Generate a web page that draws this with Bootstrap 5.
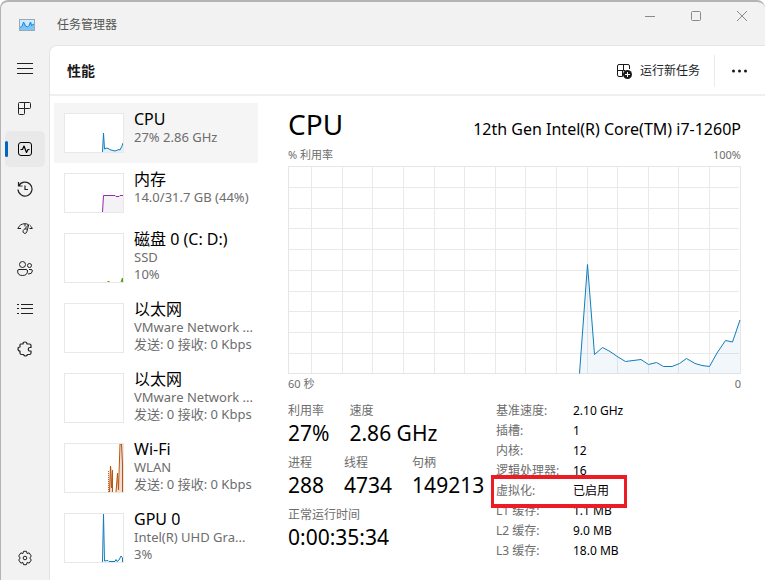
<!DOCTYPE html>
<html lang="zh-CN">
<head>
<meta charset="utf-8">
<meta name="viewport" content="width=device-width, initial-scale=1">
<title>任务管理器</title>
<link href="https://cdn.jsdelivr.net/npm/bootstrap@5.3.0/dist/css/bootstrap.min.css" rel="stylesheet">
<style>
  body { font-family: "Noto Sans", "Noto Sans CJK SC", sans-serif; font-size: 12px; line-height: 20px; color: #000; background: #fff; }
  svg { display: block; fill: none; }
  .tm-window { background: #f2f2f2; border: 1px solid #b4b4b4; border-width: 2px 0 0 1px; border-radius: 8px 8px 0 0; }
  .tm-title { height: 43px; padding-top: 2px; color: #555; }
  .tm-appicon { width: 48px; }
  .tm-window .btn { font-size: 12px; line-height: 20px; }
  .win-btn { width: 46px; height: 24px; color: #8a8a8a; }
  .tm-rail { width: 48px; padding-top: 6px; }
  .rail-btn { width: 40px; height: 36px; margin-bottom: 4px; color: #222; border-radius: 5px; position: relative; }
  .rail-btn.active { background: #e9e9e9; }
  .rail-btn.active::before { content: ""; position: absolute; left: 0; top: 10px; width: 3px; height: 16px; border-radius: 2px; background: #0067c0; }
  .tm-main { border: 1px solid #e4e4e4; border-width: 1px 0 0 1px; border-radius: 8px 0 0 0; }
  .tm-head { height: 50px; border-bottom: 2px solid #efefef; padding: 2px 0 0 17px; }
  .tm-head h1 { font-size: 14px; line-height: 20px; font-weight: 700; color: #1a1a1a; }
  .run-btn { margin-right: 14px; }
  .more-btn { width: 51px; height: 32px; border-left: 1px solid #ebebeb; color: #1a1a1a; }
  .more-btn circle { fill: currentColor; }
  .perf-list { width: 204px; margin: 7px 0 0 4px; }
  .perf-item { height: 60px; padding: 6px 0 0 10px; gap: 10px; color: #000; white-space: nowrap; }
  .perf-item.tall { height: 70px; }
  .perf-item.active { background: #f5f5f5; }
  .thumb { width: 60px; height: 40px; margin-top: 4px; background: #fff; border: 1px solid #e8e8e8; }
  .tall .thumb { height: 50px; }
  .perf-name { font-size: 16px; line-height: 20px; }
  .perf-sub { font-size: 13px; color: #6d6d6d; line-height: 17px; }
  .perf-detail { padding: 7px 24px 0 30px; }
  .detail-name { font-size: 28px; line-height: 43px; font-weight: 400; }
  .cpu-model { font-size: 16px; line-height: 24px; padding-top: 8px; }
  .axis { font-size: 11px; line-height: 18px; color: #6d6d6d; }
  .chart { width: 100%; height: 209px; margin-top: 2px; }
  .stats { padding-top: 8px; }
  .stat-col { width: 208px; }
  .stat-row { gap: 20px; margin-bottom: 8px; }
  .stat-label, .spec-table th { color: #6d6d6d; font-weight: 400; }
  .stat-value { font-size: 21px; line-height: 24px; }
  .spec-table td, .spec-table th { padding: 0; height: 20px; white-space: nowrap; }
  .spec-table th { width: 77px; }
  .mark-box { position: absolute; left: -5px; top: 74px; width: 136px; height: 33px; border: solid #ed1c24; border-width: 4px 3px; pointer-events: none; }
</style>
<script src="https://cdn.jsdelivr.net/npm/bootstrap@5.3.0/dist/js/bootstrap.bundle.min.js"></script>
</head>
<body>
<div class="tm-window d-flex flex-column vh-100 overflow-hidden">
  <header class="tm-title d-flex align-items-center flex-shrink-0">
    <div class="tm-appicon d-flex justify-content-center ps-1">
      <svg width="16" height="12" viewBox="0 0 16 12"><rect x=".5" y=".5" width="15" height="11" fill="#cfeafa" stroke="#9aa9b8"/><path d="M1 9 3 8 5 3 7 7 9 8 11 4 12 3 13 6 15 5V11H1Z" fill="#7cc5f5"/><path d="M1 8.500 3 7.500 4.500 3 6.500 7 8.500 8 10 6.500 11.500 3 12.500 6.500 15 5" stroke="#1583dc"/></svg>
    </div>
    <div class="ps-2">任务管理器</div>
    <div class="ms-auto d-flex align-self-start">
      <button class="win-btn btn p-0 border-0 d-flex align-items-center justify-content-center" type="button" aria-label="最小化"><svg width="12" height="12" stroke="currentColor"><path d="M1 6.500H11"/></svg></button>
      <button class="win-btn btn p-0 border-0 d-flex align-items-center justify-content-center" type="button" aria-label="最大化"><svg width="12" height="12" stroke="currentColor"><rect x="1.500" y="1.500" width="9" height="9" rx="1"/></svg></button>
      <button class="win-btn btn p-0 border-0 d-flex align-items-center justify-content-center" type="button" aria-label="关闭"><svg width="12" height="12" stroke="currentColor"><path d="M1 1 11 11M11 1 1 11"/></svg></button>
    </div>
  </header>
  <div class="d-flex flex-grow-1 overflow-hidden">
    <nav class="tm-rail d-flex flex-column align-items-center flex-shrink-0" aria-label="导航">
      <button class="rail-btn btn p-0 border-0 d-flex align-items-center justify-content-center" type="button" aria-label="菜单"><svg width="16" height="16" stroke="currentColor"><path d="M0 2.500H16M0 7.500H16M0 12.500H16"/></svg></button>
      <button class="rail-btn btn p-0 border-0 d-flex align-items-center justify-content-center" type="button" aria-label="进程"><svg width="16" height="16" stroke="currentColor"><path d="M2.500 1.500H12.500Q13.500 1.500 13.500 2.500V6.500Q13.500 7.500 12.500 7.500H7.500V12.500Q7.500 13.500 6.500 13.500H2.500Q1.500 13.500 1.500 12.500V2.500Q1.500 1.500 2.500 1.500ZM1.500 7.500H7.500V1.500"/></svg></button>
      <button class="rail-btn btn active p-0 border-0 d-flex align-items-center justify-content-center" type="button" aria-label="性能"><svg width="16" height="16" stroke="currentColor"><rect x="1.500" y="1.500" width="13" height="13" rx="2.500"/><path d="M3.500 8.500H5.500L7 5 9.500 11.500 11 8.500H12.500" stroke-width="1.200" stroke-linejoin="round"/></svg></button>
      <button class="rail-btn btn p-0 border-0 d-flex align-items-center justify-content-center" type="button" aria-label="应用历史记录"><svg width="16" height="16" stroke="currentColor" stroke-width="1.200"><path d="M1.500 1V5H5.500M1.700 5A7 7 0 1 1 1 8.500M8 4.500V8.500H11"/></svg></button>
      <button class="rail-btn btn p-0 border-0 d-flex align-items-center justify-content-center" type="button" aria-label="启动应用"><svg width="16" height="16" stroke="currentColor"><path d="M.8 7.500Q3 2.700 8 2.700 10 2.700 11 3.500M13 4.500Q14.700 5.800 15.300 7.500M.8 7.500H4M15.300 7.500H12.500M8 3V5.500M11.800 3.500 9.800 10.800Q9 13 7.200 12.300 5.300 11.300 6.200 9.500L11.800 3.500M9 7V9"/></svg></button>
      <button class="rail-btn btn p-0 border-0 d-flex align-items-center justify-content-center" type="button" aria-label="用户"><svg width="16" height="16" stroke="currentColor"><circle cx="5.500" cy="3.500" r="3"/><circle cx="12.500" cy="4.500" r="2"/><path d="M2 8.500H9Q10.500 8.500 10.500 10 10.500 14.500 5.500 14.500T.6 10Q.6 8.500 2 8.500ZM12 8.500H14Q15.400 8.500 15.400 10 15.200 13.300 11 13"/></svg></button>
      <button class="rail-btn btn p-0 border-0 d-flex align-items-center justify-content-center" type="button" aria-label="详细信息"><svg width="16" height="16" stroke="currentColor"><path d="M4 3.500H16M4 7.500H16M4 12.500H16M0 3.500H2M0 7.500H2M0 12.500H2"/></svg></button>
      <button class="rail-btn btn p-0 border-0 d-flex align-items-center justify-content-center" type="button" aria-label="服务"><svg width="16" height="16" stroke="currentColor" stroke-width="1.200" stroke-linejoin="round"><path d="M3.500 3H6Q6 1 8 1T10 3H12.500Q14 3 14 4.500V6.500H13Q11.300 6.500 11.300 8.300T13 10H14V12Q14 13.500 12.500 13.500H10.500Q10 15 8.500 15T6.500 13.500H4.500Q3 13.500 3 12V10Q1 10 1 8T3 6V4Q3 3 3.500 3Z"/></svg></button>
      <button class="rail-btn btn mt-auto p-0 border-0 d-flex align-items-center justify-content-center" type="button" aria-label="设置"><svg width="16" height="16" stroke="currentColor" stroke-linejoin="round"><path d="M6.500 1.300H9.500L10 3.500 12.200 2.900 14.300 6 12.800 8 14.300 10 12.200 13.100 10 12.500 9.500 14.700H6.500L6 12.500 3.800 13.100 1.700 10 3.200 8 1.700 6 3.800 2.900 6 3.500Z"/><circle cx="8" cy="8" r="1.800"/></svg></button>
    </nav>
    <main class="tm-main bg-white flex-grow-1 d-flex flex-column overflow-hidden">
      <div class="tm-head d-flex align-items-center flex-shrink-0">
        <h1 class="m-0">性能</h1>
        <button class="run-btn btn ms-auto p-0 border-0 d-flex align-items-center gap-2" type="button"><svg width="16" height="16" stroke="#1a1a1a"><path d="M6.500 13.500H3Q1.500 13.500 1.500 12V3Q1.500 1.500 3 1.500H12Q13.500 1.500 13.500 3V6M1.500 7.500H7.500V1.500M7.500 7.500H9"/><path d="M6.500 7.500V13.500"/><circle cx="11.500" cy="11.500" r="4.500" fill="#1a1a1a" stroke="none"/><path d="M11.500 9V14M9 11.500H14" stroke="#fff"/></svg><span>运行新任务</span></button>
        <button class="more-btn btn p-0 border-top-0 border-bottom-0 border-end-0 rounded-0 d-flex align-items-center justify-content-center" type="button" aria-label="更多"><svg width="16" height="4"><circle cx="1.500" cy="2" r="1.500"/><circle cx="7.500" cy="2" r="1.500"/><circle cx="13.500" cy="2" r="1.500"/></svg></button>
      </div>
      <div class="d-flex">
        <div class="perf-list flex-shrink-0 d-flex flex-column">
          <button class="perf-item active btn rounded-0 border-0 text-start d-flex" type="button"><svg class="thumb flex-shrink-0" viewBox="0 0 58 38"><path d="M37 38 38.500 18 40 35 43 34 46 36H49L51 37 54 36 56 33 58 30V38Z" fill="#e5f1f8"/><path d="M37.500 38 38.500 19 39.500 35 42 34 46 36 50 37 54 35.500 55 36 57 32 58 29" stroke="#117dbb"/></svg><span><span class="perf-name d-block">CPU</span><span class="perf-sub d-block">27% 2.86 GHz</span></span></button>
          <button class="perf-item btn rounded-0 border-0 text-start d-flex" type="button"><svg class="thumb flex-shrink-0" viewBox="0 0 58 38"><path d="M37 38 38 21.500H58V38Z" fill="#f4f2f5"/><path d="M37.500 38 38.500 21.500H50L51 22.500H54L55 21.500H58" stroke="#9528b4"/></svg><span><span class="perf-name d-block">内存</span><span class="perf-sub d-block">14.0/31.7 GB (44%)</span></span></button>
          <button class="perf-item tall btn rounded-0 border-0 text-start d-flex" type="button"><svg class="thumb flex-shrink-0" viewBox="0 0 58 48"><path d="M42.500 47.500H44.500M56 47.500 57.500 44V48Z" stroke="#4da60c"/></svg><span><span class="perf-name d-block">磁盘 0 (C: D:)</span><span class="perf-sub d-block">SSD<br>10%</span></span></button>
          <button class="perf-item tall btn rounded-0 border-0 text-start d-flex" type="button"><svg class="thumb flex-shrink-0" viewBox="0 0 58 48"></svg><span><span class="perf-name d-block">以太网</span><span class="perf-sub d-block">VMware Network ...<br>发送: 0 接收: 0 Kbps</span></span></button>
          <button class="perf-item tall btn rounded-0 border-0 text-start d-flex" type="button"><svg class="thumb flex-shrink-0" viewBox="0 0 58 48"></svg><span><span class="perf-name d-block">以太网</span><span class="perf-sub d-block">VMware Network ...<br>发送: 0 接收: 0 Kbps</span></span></button>
          <button class="perf-item tall btn rounded-0 border-0 text-start d-flex" type="button"><svg class="thumb flex-shrink-0" viewBox="0 0 58 48"><path d="M43 48V26L45 40 46 22 48 27V48ZM51 48 53 29 54 46 55.500 0H58V48Z" fill="#f3ddcf"/><path d="M43.500 48V26" stroke-dasharray="1 1" stroke="#c06a35"/><path d="M44.500 48 45.500 22 46.500 44 47.500 26V48M51 48 52.500 29 53.500 46 55 0H56.500L57.500 20V48" stroke="#b5530f"/></svg><span><span class="perf-name d-block">Wi-Fi</span><span class="perf-sub d-block">WLAN<br>发送: 0 接收: 0 Kbps</span></span></button>
          <button class="perf-item tall btn rounded-0 border-0 text-start d-flex" type="button"><svg class="thumb flex-shrink-0" viewBox="0 0 58 48"><path d="M37.500 48 38.500 0 39.500 47 43 46.500 44 47.500H50L51 45.500 52 47.500 54 46 56 42 57.500 44V48" stroke="#117dbb"/></svg><span><span class="perf-name d-block">GPU 0</span><span class="perf-sub d-block">Intel(R) UHD Gra...<br>3%</span></span></button>
        </div>
        <section class="perf-detail flex-grow-1">
          <div class="d-flex justify-content-between align-items-center">
            <h2 class="detail-name m-0">CPU</h2>
            <div class="cpu-model">12th Gen Intel(R) Core(TM) i7-1260P</div>
          </div>
          <div class="axis d-flex justify-content-between"><span>% 利用率</span><span>100%</span></div>
          <svg class="chart" viewBox="0 0 453 209" preserveAspectRatio="none">
            <path d="M23.500 0V208M54.500 0V208M84.500 0V208M115.500 0V208M146.500 0V208M176.500 0V208M207.500 0V208M237.500 0V208M268.500 0V208M299.500 0V208M329.500 0V208M360.500 0V208M390.500 0V208M421.500 0V208M0 21.500H451M0 42.500H451M0 62.500H451M0 83.500H451M0 104.500H451M0 125.500H451M0 145.500H451M0 166.500H451M0 187.500H451" stroke="#e9e9e9"/>
            <rect x=".5" y=".5" width="452" height="207" stroke="#e6e6e6"/>
            <path d="M291.500 207.500 299.500 98.500 306.500 188.500 314.500 181.500 322 185.500 330 191 337.500 195.500 353 193.500 360.500 198.500 368.500 196.500 375.500 200.500H384L391.500 197.500 398.500 192.500 407 197.500 414 199.500 421.500 200.500 429 187 437.500 174.500 444.500 176 452 154V207.500Z" fill="#117dbb" fill-opacity=".06"/>
            <path d="M291.500 207.500 299.500 98.500 306.500 188.500 314.500 181.500 322 185.500 330 191 337.500 195.500 353 193.500 360.500 198.500 368.500 196.500 375.500 200.500H384L391.500 197.500 398.500 192.500 407 197.500 414 199.500 421.500 200.500 429 187 437.500 174.500 444.500 176 452 154" stroke="#117dbb"/>
          </svg>
          <div class="axis d-flex justify-content-between"><span>60 秒</span><span>0</span></div>
          <div class="stats d-flex">
            <div class="stat-col flex-shrink-0">
              <div class="stat-row d-flex"><div><div class="stat-label">利用率</div><div class="stat-value">27%</div></div><div><div class="stat-label">速度</div><div class="stat-value">2.86 GHz</div></div></div>
              <div class="stat-row d-flex"><div><div class="stat-label">进程</div><div class="stat-value">288</div></div><div><div class="stat-label">线程</div><div class="stat-value">4734</div></div><div><div class="stat-label">句柄</div><div class="stat-value">149213</div></div></div>
              <div class="stat-row d-flex"><div><div class="stat-label">正常运行时间</div><div class="stat-value">0:00:35:34</div></div></div>
            </div>
            <div class="position-relative">
              <table class="spec-table">
                <tbody>
                  <tr><th scope="row">基准速度:</th><td>2.10 GHz</td></tr>
                  <tr><th scope="row">插槽:</th><td>1</td></tr>
                  <tr><th scope="row">内核:</th><td>12</td></tr>
                  <tr><th scope="row">逻辑处理器:</th><td>16</td></tr>
                  <tr><th scope="row">虚拟化:</th><td>已启用</td></tr>
                  <tr><th scope="row">L1 缓存:</th><td>1.1 MB</td></tr>
                  <tr><th scope="row">L2 缓存:</th><td>9.0 MB</td></tr>
                  <tr><th scope="row">L3 缓存:</th><td>18.0 MB</td></tr>
                </tbody>
              </table>
              <div class="mark-box"></div>
            </div>
          </div>
        </section>
      </div>
    </main>
  </div>
</div>
</body>
</html>
